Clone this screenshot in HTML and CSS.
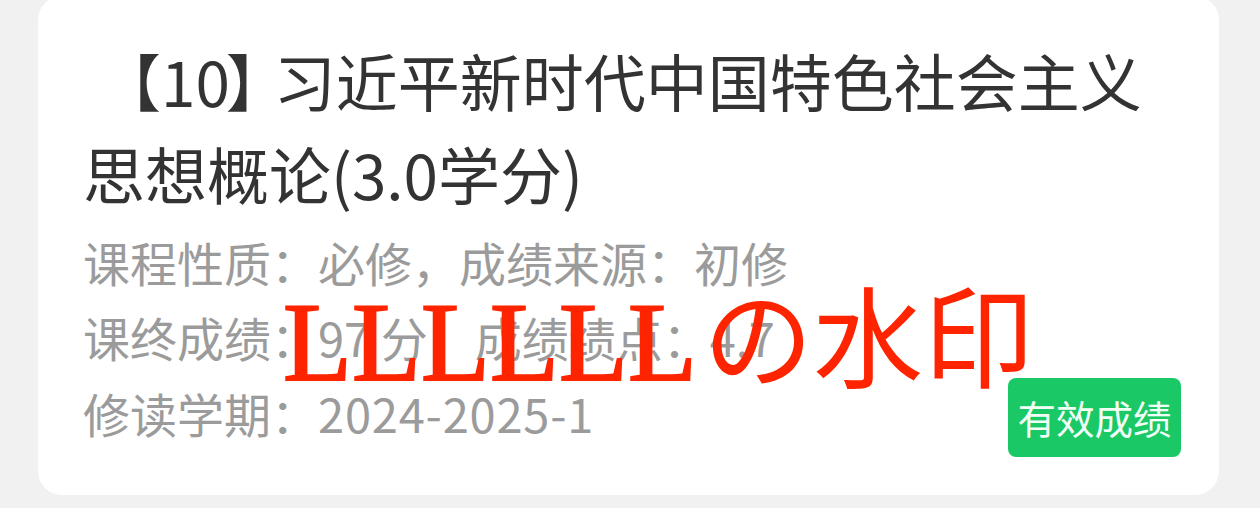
FILE: index.html
```html
<!DOCTYPE html>
<html lang="zh-CN">
<head>
<meta charset="utf-8">
<title>成绩</title>
<link rel="stylesheet" href="styles.css">
</head>
<body>
<div class="page">
  <div class="card">
    <h1 class="title"><span class="br-open">【</span>10<span class="br-close">】</span>习近平新时代中国特色社会主义思想概论(3.0学分)</h1>
    <div class="info">
      <p class="line">课程性质：必修，成绩来源：初修</p>
      <p class="line">课终成绩：97 分，成绩绩点：4.7</p>
      <p class="line">修读学期：<span class="num">2024-2025-1</span></p>
    </div>
    <span class="badge">有效成绩</span>
    <div class="watermark"><span class="wm-latin" lang="en">LLLLLL</span><span class="wm-cjk" lang="ja">の水印</span></div>
  </div>
</div>
</body>
</html>
```
FILE: styles.css
```css
html, body {
  margin: 0;
  padding: 0;
  background: #f1f1f1;
}
.page {
  padding: 0 41px 0 38px;
}
.card {
  position: relative;
  margin-top: -4px;
  background: #ffffff;
  border-radius: 24px;
  padding: 37.5px 45px 45px 45px;
  font-family: "Noto Sans CJK SC", "Noto Sans", sans-serif;
}
.title {
  margin: 0;
  font-size: 62px;
  line-height: 93px;
  font-weight: 400;
  color: #333333;
}
.br-open {
  margin-left: 16px;
}
.br-close {
  margin-left: -4px;
  margin-right: -14px;
}
.info {
  margin-top: 4px;
}
.line {
  margin: 0;
  font-size: 47px;
  line-height: 75.5px;
  color: #9b9b9b;
  white-space: nowrap;
}
.num {
  letter-spacing: 0.8px;
}
.badge {
  position: absolute;
  right: 38px;
  bottom: 38px;
  width: 173px;
  height: 79px;
  line-height: 79px;
  text-align: center;
  background: #1ac966;
  border-radius: 8px;
  color: #f2fff6;
  font-size: 38.5px;
}
.watermark {
  position: absolute;
  left: 245px;
  top: 279px;
  line-height: 114px;
  color: #ff2400;
  white-space: nowrap;
  font-family: "Liberation Serif", "Times New Roman", serif;
}
.wm-latin {
  font-family: "Liberation Serif", "Times New Roman", serif;
  font-size: 113px;
  -webkit-text-stroke: 2px #ff2400;
}
.wm-cjk {
  font-family: "Noto Sans CJK JP", sans-serif;
  font-size: 110px;
  margin-left: 6px;
}
```
